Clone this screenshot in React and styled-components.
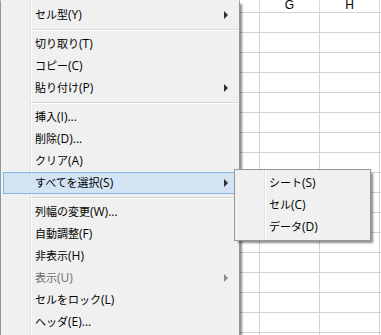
import React from "react";
import styled, { createGlobalStyle } from "styled-components";

const GlobalStyle = createGlobalStyle`
  html, body {
    margin: 0;
    padding: 0;
    background: #fff;
    overflow: hidden;
  }
`;

const Page = styled.div`
  position: relative;
  width: 381px;
  height: 335px;
  overflow: hidden;
  background: #fff;
`;

const Sheet = styled.div`
  display: grid;
  grid-template-columns: 20px repeat(6, 60px) 20px;
  grid-template-rows: 13px;
  grid-auto-rows: 20px;
`;

const HeadCell = styled.div`
  box-sizing: border-box;
  border-right: 1px solid #dadada;
  border-bottom: 1px solid #d4d4d4;
  font-family: "Liberation Sans", Arial, sans-serif;
  font-size: 12px;
  line-height: 12px;
  text-align: center;
  color: #000;
`;

const HeadText = styled.span`
  display: block;
  margin-top: -1px;
`;

const Cell = styled.div`
  box-sizing: border-box;
  border-right: 1px solid #d4d4d4;
  border-bottom: 1px solid #d4d4d4;
`;

const Menu = styled.div`
  position: absolute;
  left: ${(p) => p.$left}px;
  top: ${(p) => p.$top}px;
  width: ${(p) => p.$width}px;
  box-sizing: border-box;
  padding: ${(p) => (p.$open ? "3px 0 2px" : "2px 0")};
  border: 1px solid #979797;
  border-top-color: ${(p) => (p.$open ? "transparent" : "#979797")};
  background:
    linear-gradient(
      to right,
      transparent 29px,
      #e2e3e3 29px,
      #e2e3e3 30px,
      #ffffff 30px,
      #ffffff 31px,
      transparent 31px
    ),
    #f0f0f0;
  box-shadow: 3px 3px 2px -1px rgba(0, 0, 0, 0.45);
  font-family: "Open Sans", "Noto Sans CJK JP", sans-serif;
  font-size: 11px;
  z-index: ${(p) => p.$z};
`;

const Item = styled.div`
  display: flex;
  align-items: center;
  height: 22px;
  margin: 0 2px;
  padding-left: 31px;
  padding-right: 7px;
  box-sizing: border-box;
  border: 1px solid ${(p) => (p.$active ? "#86b5e8" : "transparent")};
  background: ${(p) => (p.$active ? "#d2e3f4" : "transparent")};
  color: ${(p) => (p.$disabled ? "#6d6d6d" : "#000")};
  white-space: nowrap;
`;

const Label = styled.span`
  flex: 1;
  line-height: 20px;
`;

// accelerator part, e.g. "(Y)" – latin text is drawn a bit larger
const Key = styled.span`
  font-size: 12px;
`;

const Arrow = styled.span`
  width: 0;
  height: 0;
  margin-right: 1px;
  border-top: 4px solid transparent;
  border-bottom: 4px solid transparent;
  border-left: 4px solid ${(p) => (p.$disabled ? "#8a8a8a" : "#2e2e2e")};
`;

const Separator = styled.div`
  height: 1px;
  margin: 3px 1px 2px 30px;
  background: #d7d7d7;
  border-bottom: 1px solid #ffffff;
`;

const mainItems = [
  { label: "セル型", key: "(Y)", sub: true },
  "sep",
  { label: "切り取り", key: "(T)" },
  { label: "コピー", key: "(C)" },
  { label: "貼り付け", key: "(P)", sub: true },
  "sep",
  { label: "挿入", key: "(I)..." },
  { label: "削除", key: "(D)..." },
  { label: "クリア", key: "(A)" },
  { label: "すべてを選択", key: "(S)", sub: true, active: true },
  "sep",
  { label: "列幅の変更", key: "(W)..." },
  { label: "自動調整", key: "(F)" },
  { label: "非表示", key: "(H)" },
  { label: "表示", key: "(U)", sub: true, disabled: true },
  { label: "セルをロック", key: "(L)" },
  { label: "ヘッダ", key: "(E)..." },
];

const subItems = [
  { label: "シート", key: "(S)" },
  { label: "セル", key: "(C)" },
  { label: "データ", key: "(D)" },
];

// only G and H are visible beside the menu
const columns = ["", "", "", "", "", "G", "H", ""];

const App = () => {
  const rows = Array.from({ length: 17 });

  return (
    <>
      <GlobalStyle />
      <Page>
        <Sheet>
          {columns.map((c, i) => (
            <HeadCell key={"h" + i}>
              <HeadText>{c}</HeadText>
            </HeadCell>
          ))}
          {rows.map((_, r) =>
            columns.map((_, c) => <Cell key={r + "-" + c} />)
          )}
        </Sheet>

        <Menu $left={0} $top={0} $width={240} $open $z={1}>
          {mainItems.map((it, i) =>
            it === "sep" ? (
              <Separator key={i} />
            ) : (
              <Item key={i} $active={it.active} $disabled={it.disabled}>
                <Label>
                  {it.label}
                  <Key>{it.key}</Key>
                </Label>
                {it.sub && <Arrow $disabled={it.disabled} />}
              </Item>
            )
          )}
        </Menu>

        <Menu $left={234} $top={169} $width={137} $z={2}>
          {subItems.map((s) => (
            <Item key={s.label}>
              <Label>
                {s.label}
                <Key>{s.key}</Key>
              </Label>
            </Item>
          ))}
        </Menu>
      </Page>
    </>
  );
};

export default App;
